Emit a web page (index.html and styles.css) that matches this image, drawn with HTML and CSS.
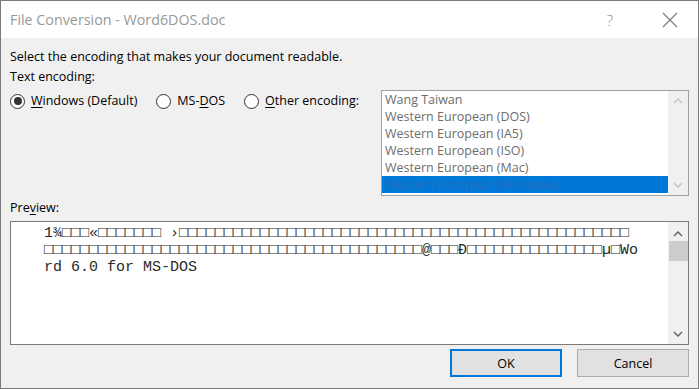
FILE: index.html
```html
<!DOCTYPE html>
<html lang="en">
<head>
    <meta charset="UTF-8">
    <title>File Conversion - Word6DOS.doc</title>
    <link rel="stylesheet" href="styles.css">
</head>
<body>
    <div class="dialog">
        <div class="titlebar">
            <span class="title">File Conversion - Word6DOS.doc</span>
            <span class="help">?</span>
            <span class="close">
                <svg width="16" height="16" viewBox="0 0 16 16"><path d="M1 1 L15 15 M15 1 L1 15" stroke="#777" stroke-width="1.1" fill="none"/></svg>
            </span>
        </div>

        <div class="content">
            <p class="intro">Select the encoding that makes your document readable.</p>
            <div class="label">Text encoding:</div>

            <div class="encoding-row">
                <div class="radios">
                    <label class="radio"><span class="circle checked"></span><span><u>W</u>indows (Default)</span></label>
                    <label class="radio"><span class="circle"></span><span>MS-<u>D</u>OS</span></label>
                    <label class="radio"><span class="circle"></span><span><u>O</u>ther encoding:</span></label>
                </div>

                <div class="listbox">
                    <ul class="items">
                        <li>Wang Taiwan</li>
                        <li>Western European (DOS)</li>
                        <li>Western European (IA5)</li>
                        <li>Western European (ISO)</li>
                        <li>Western European (Mac)</li>
                        <li class="selected">Western European (Windows)</li>
                    </ul>
                    <div class="scrollbar disabled">
                        <svg class="arrow" width="10" height="6" viewBox="0 0 10 6"><path d="M1 5 L5 1 L9 5" stroke="#c2c2c2" stroke-width="1.3" fill="none"/></svg>
                        <div class="track"></div>
                        <svg class="arrow" width="10" height="6" viewBox="0 0 10 6"><path d="M1 1 L5 5 L9 1" stroke="#c2c2c2" stroke-width="1.3" fill="none"/></svg>
                    </div>
                </div>
            </div>

            <div class="label preview-label">Pre<u>v</u>iew:</div>
            <div class="preview">
                <div class="preview-text">
                    <div class="line">1¾□□□«□□□□□□□ ›□□□□□□□□□□□□□□□□□□□□□□□□□□□□□□□□□□□□□□□□□□□□□□□□□□</div>
                    <div class="line">□□□□□□□□□□□□□□□□□□□□□□□□□□□□□□□□□□□□□□□□□□@□□□Ð□□□□□□□□□□□□□□□µ□Wo</div>
                    <div class="line">rd 6.0 for MS-DOS</div>
                </div>
                <div class="scrollbar">
                    <svg class="arrow" width="10" height="6" viewBox="0 0 10 6"><path d="M1 5 L5 1 L9 5" stroke="#606060" stroke-width="1.4" fill="none"/></svg>
                    <div class="thumb"></div>
                    <div class="track"></div>
                    <svg class="arrow" width="10" height="6" viewBox="0 0 10 6"><path d="M1 1 L5 5 L9 1" stroke="#606060" stroke-width="1.4" fill="none"/></svg>
                </div>
            </div>

            <div class="buttons">
                <button class="btn default">OK</button>
                <button class="btn">Cancel</button>
            </div>
        </div>
    </div>
</body>
</html>
```

FILE: styles.css
```css
body {
    margin: 0;
    font-family: "Open Sans", "Noto Sans", sans-serif;
    font-size: 12.5px;
    color: #000;
    background-color: #fff;
}

.dialog {
    width: 699px;
    height: 389px;
    box-sizing: border-box;
    border: 1px solid #7a7a7a;
    background-color: #f0f0f0;
    display: flex;
    flex-direction: column;
}

.titlebar {
    height: 37px;
    flex-shrink: 0;
    background-color: #fff;
    display: flex;
    align-items: center;
    padding-left: 9px;
}

.title {
    flex: 1;
    font-size: 14.3px;
    color: #999;
}

.help {
    width: 46px;
    margin-right: 14px;
    text-align: center;
    font-size: 15px;
    font-weight: 300;
    color: #888;
}

.close {
    width: 45px;
    margin-right: 6px;
    display: flex;
    justify-content: center;
}

.content {
    flex: 1;
    padding: 0 9px 0 9px;
    display: flex;
    flex-direction: column;
}

.intro {
    margin: 9px 0 0;
    line-height: 20px;
}

.label {
    line-height: 20px;
}

.encoding-row {
    display: flex;
    align-items: flex-start;
    margin-top: 3px;
}

.radios {
    display: flex;
    gap: 19px;
    padding-top: 1px;
}

.radio {
    display: flex;
    align-items: center;
    gap: 6px;
    line-height: 20px;
}

.radio u, .label u {
    text-decoration-thickness: 1px;
    text-underline-offset: 2px;
}

.circle {
    width: 13px;
    height: 13px;
    border: 1px solid #333;
    border-radius: 50%;
    background-color: #fff;
    display: flex;
    align-items: center;
    justify-content: center;
}

.circle.checked::after {
    content: "";
    width: 8px;
    height: 8px;
    border-radius: 50%;
    background-color: #333;
}

.listbox {
    margin-left: auto;
    width: 308px;
    height: 106px;
    box-sizing: border-box;
    border: 1px solid #a0a0a0;
    background-color: #fff;
    display: flex;
}

.items {
    flex: 1;
    list-style: none;
    margin: 0;
    padding: 0;
}

.items li {
    height: 17px;
    line-height: 17px;
    padding-left: 3px;
    color: #6d6d6d;
}

.items li.selected {
    background-color: #0078d7;
    color: #2a6cb8;
}

.scrollbar {
    width: 20px;
    background-color: #f0f0f0;
    display: flex;
    flex-direction: column;
    align-items: center;
}

.scrollbar .arrow {
    margin: 7px 0;
    flex-shrink: 0;
}

.scrollbar .track {
    flex: 1;
}

.scrollbar .thumb {
    width: 19px;
    height: 20px;
    background-color: #cdcdcd;
}

.preview-label {
    margin-top: 2px;
}

.preview {
    margin-top: 3px;
    height: 124px;
    box-sizing: border-box;
    border: 1px solid #7a7a7a;
    background-color: #fff;
    display: flex;
}

.preview-text {
    flex: 1;
    padding: 3px 0 0 33px;
    font-family: "Liberation Mono", "DejaVu Sans Mono", monospace;
    font-size: 15px;
    line-height: 17px;
    color: #2a2a2a;
    overflow: hidden;
}

.preview-text .line {
    white-space: pre;
    height: 17px;
}

.preview .scrollbar .arrow:first-child {
    margin: 9px 0 4px;
}

.buttons {
    display: flex;
    justify-content: flex-end;
    gap: 15px;
    margin-top: 4px;
}

.btn {
    width: 112px;
    height: 28px;
    box-sizing: border-box;
    border: 1px solid #adadad;
    background-color: #e1e1e1;
    font-family: "Open Sans", "Noto Sans", sans-serif;
    font-size: 12.5px;
    color: #000;
    padding: 0;
}

.btn.default {
    border: 2px solid #0078d7;
}
```
